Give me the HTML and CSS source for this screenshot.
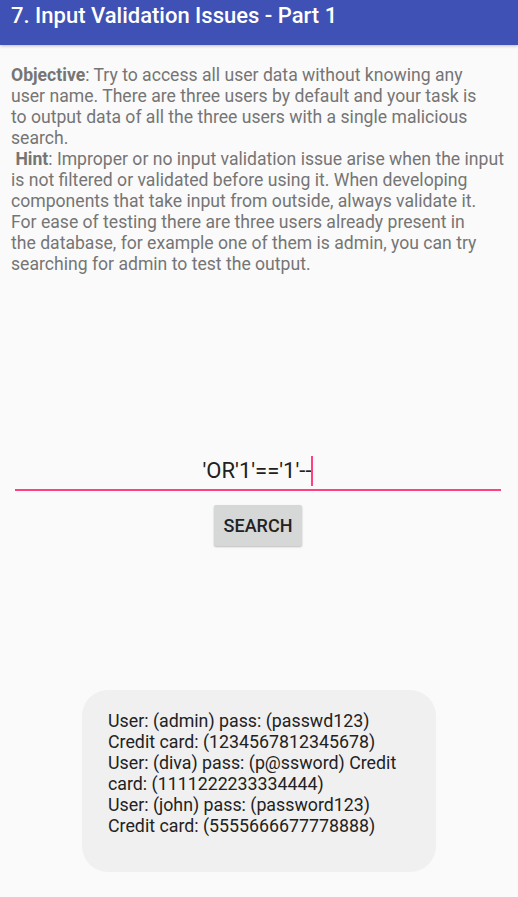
FILE: index.html
```html
<!DOCTYPE html>
<html>
<head>
<meta charset="utf-8">
<link rel="stylesheet" href="styles.css">
</head>
<body>
<header class="appbar">
  <h1 class="title">7. Input Validation Issues - Part 1</h1>
</header>
<main class="content">
  <p class="desc"><b>Objective</b>: Try to access all user data without knowing any<br>user name. There are three users by default and your task is<br>to output data of all the three users with a single malicious<br>search.<br>&nbsp;<b>Hint</b>: Improper or no input validation issue arise when the input<br>is not filtered or validated before using it. When developing<br>components that take input from outside, always validate it.<br>For ease of testing there are three users already present in<br>the database, for example one of them is admin, you can try<br>searching for admin to test the output.</p>
  <div class="field">
    <span class="field-text">'OR'1'=='1'--</span><span class="cursor"></span>
  </div>
  <div class="btn-row">
    <button class="btn">SEARCH</button>
  </div>
  <div class="result-wrap">
    <div class="result">User: (admin) pass: (passwd123)<br>Credit card: (1234567812345678)<br>User: (diva) pass: (p@ssword) Credit<br>card: (1111222233334444)<br>User: (john) pass: (password123)<br>Credit card: (5555666677778888)</div>
  </div>
</main>
</body>
</html>
```
FILE: styles.css
```css
* { box-sizing: border-box; }
html, body { margin: 0; padding: 0; }
body {
  width: 518px;
  height: 897px;
  background: #fafafa;
  font-family: Roboto, "Noto Sans", sans-serif;
  overflow: hidden;
}
.appbar {
  height: 45px;
  background: #3f51b5;
  box-shadow: 0 1px 3px rgba(0,0,0,0.25);
  padding: 0 11px;
  display: flex;
  align-items: flex-start;
}
.title {
  margin: 0;
  padding-top: 3px;
  color: #fff;
  font-size: 22px;
  font-weight: 500;
  line-height: 26px;
  white-space: nowrap;
}
.content {
  padding: 0 11px;
}
.desc {
  margin: 0;
  padding-top: 20px;
  color: #757575;
  font-size: 17.6px;
  line-height: 21px;
  white-space: nowrap;
}
.desc b { font-weight: 700; }
.field {
  margin: 181px 6px 0 4px;
  height: 35px;
  border-bottom: 2px solid #ff4081;
  display: flex;
  justify-content: center;
  align-items: flex-start;
}
.field-text {
  color: #212121;
  font-size: 22px;
  line-height: 30px;
}
.cursor {
  width: 2px;
  height: 30px;
  background: #ff4081;
}
.btn-row {
  display: flex;
  justify-content: center;
  margin-top: 14px;
}
.btn {
  width: 88px;
  height: 41px;
  border: none;
  border-radius: 2px;
  background: #d6d7d7;
  box-shadow: 0 1px 2px rgba(0,0,0,0.25);
  font-family: Roboto, sans-serif;
  font-size: 18px;
  font-weight: 500;
  color: #222;
  padding: 0;
  margin-right: 2px;
}
.result-wrap {
  display: flex;
  justify-content: center;
  margin-top: 144px;
}
.result {
  width: 354px;
  height: 182px;
  background: #f0f0f0;
  border-radius: 26px;
  padding: 20px 0 0 26px;
  color: #222;
  font-size: 17.8px;
  line-height: 21px;
  white-space: nowrap;
}
```
